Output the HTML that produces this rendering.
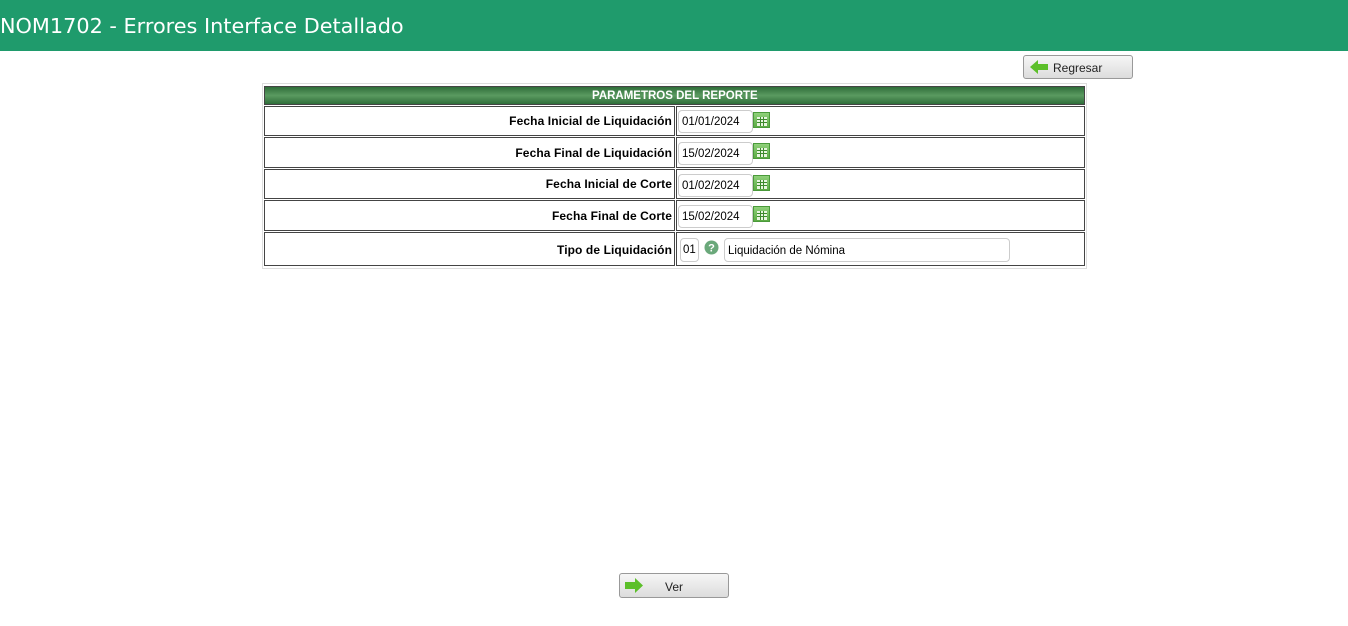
<!DOCTYPE html>
<html><head><meta charset="utf-8"><style>
body{margin:0;width:1348px;height:626px;background:#fff;font-family:"Liberation Sans",sans-serif;position:relative;overflow:hidden}
.hdr{position:absolute;left:0;top:0;width:1348px;height:51px;background:#1f9b6c;color:#fff;font-family:"DejaVu Sans",sans-serif;font-size:20.8px;line-height:52px;padding-left:0;box-sizing:border-box}
.a{position:absolute;box-sizing:border-box}
.cell{border:1px solid #444;}
.lbl{font-size:12px;font-weight:bold;text-align:right;padding-right:2px;color:#000;letter-spacing:0.1px}
.inp{border:1px solid #ccc;border-radius:4px;font-size:11.5px;padding-left:3px;background:#fff}
.cal{width:17px;height:16px;border:1px solid #4a9a3a;background:linear-gradient(#8fd07a,#5cab45);}
.cal:after{content:"";position:absolute;left:3px;top:4px;width:10px;height:9px;background:
linear-gradient(90deg,transparent 3px,#3d8a2d 3px,#3d8a2d 4px,transparent 4px,transparent 6px,#3d8a2d 6px,#3d8a2d 7px,transparent 7px),
linear-gradient(transparent 2px,#3d8a2d 2px,#3d8a2d 3px,transparent 3px,transparent 5px,#3d8a2d 5px,#3d8a2d 6px,transparent 6px),#e8f5e0}
.btn{border:1px solid #999;border-radius:3px;background:linear-gradient(#f6f6f6,#dcdcdc);font-size:12px;color:#222}
</style></head><body>
<div class="hdr">NOM1702 - Errores Interface Detallado</div>

<div class="a btn" style="left:1023px;top:55px;width:110px;height:24px">
<svg class="a" style="left:5px;top:3px" width="20" height="16" viewBox="0 0 20 16"><path d="M1 8 L9 1 L9 5 L19 5 L19 11 L9 11 L9 15 Z" fill="#5cbf2a"/></svg>
<span class="a" style="left:29px;top:5px">Regresar</span></div>

<div class="a" style="left:262px;top:83px;width:825px;height:186px;border:1px solid #ddd"></div>
<div class="a" style="left:264px;top:86px;width:821px;height:19px;background:linear-gradient(#2f6e3a,#5a9a60 50%,#2f6e3a);border:1px solid #444;color:#fff;font-size:11.5px;font-weight:bold;line-height:18px;padding-left:327px">PARAMETROS DEL REPORTE</div>

<div class="a cell lbl" style="left:264px;top:106px;width:411px;height:30px;line-height:28px">Fecha Inicial de Liquidación</div>
<div class="a cell" style="left:676px;top:106px;width:409px;height:30px"><div class="a inp" style="left:1px;top:3px;width:75px;height:23px;line-height:22px">01/01/2024</div><div class="a cal" style="left:76px;top:5px"></div></div>

<div class="a cell lbl" style="left:264px;top:137px;width:411px;height:31px;line-height:30px">Fecha Final de Liquidación</div>
<div class="a cell" style="left:676px;top:137px;width:409px;height:31px"><div class="a inp" style="left:1px;top:4px;width:75px;height:23px;line-height:22px">15/02/2024</div><div class="a cal" style="left:76px;top:5px"></div></div>

<div class="a cell lbl" style="left:264px;top:169px;width:411px;height:30px;line-height:29px">Fecha Inicial de Corte</div>
<div class="a cell" style="left:676px;top:169px;width:409px;height:30px"><div class="a inp" style="left:1px;top:4px;width:75px;height:23px;line-height:22px">01/02/2024</div><div class="a cal" style="left:76px;top:5px"></div></div>

<div class="a cell lbl" style="left:264px;top:200px;width:411px;height:31px;line-height:30px">Fecha Final de Corte</div>
<div class="a cell" style="left:676px;top:200px;width:409px;height:31px"><div class="a inp" style="left:1px;top:4px;width:75px;height:23px;line-height:22px">15/02/2024</div><div class="a cal" style="left:76px;top:5px"></div></div>

<div class="a cell lbl" style="left:264px;top:232px;width:411px;height:34px;line-height:34px">Tipo de Liquidación</div>
<div class="a cell" style="left:676px;top:232px;width:409px;height:34px">
<div class="a inp" style="left:3px;top:5px;width:19px;height:24px;line-height:23px;padding-left:2px">01</div>
<svg class="a" style="left:27px;top:7px" width="15" height="15" viewBox="0 0 15 15"><circle cx="7.5" cy="7.5" r="7" fill="#6aa87a"/><text x="7.5" y="11.5" font-size="11" font-weight="bold" fill="#fff" text-anchor="middle" font-family="Liberation Sans">?</text></svg>
<div class="a inp" style="left:47px;top:5px;width:286px;height:24px;line-height:24px">Liquidación de Nómina</div>
</div>

<div class="a btn" style="left:619px;top:573px;width:110px;height:25px">
<svg class="a" style="left:4px;top:3px" width="20" height="17" viewBox="0 0 20 17"><path d="M19 8.5 L11 1 L11 5 L1 5 L1 12 L11 12 L11 16 Z" fill="#5cbf2a"/></svg>
<span class="a" style="left:45px;top:6px">Ver</span></div>
</body></html>
